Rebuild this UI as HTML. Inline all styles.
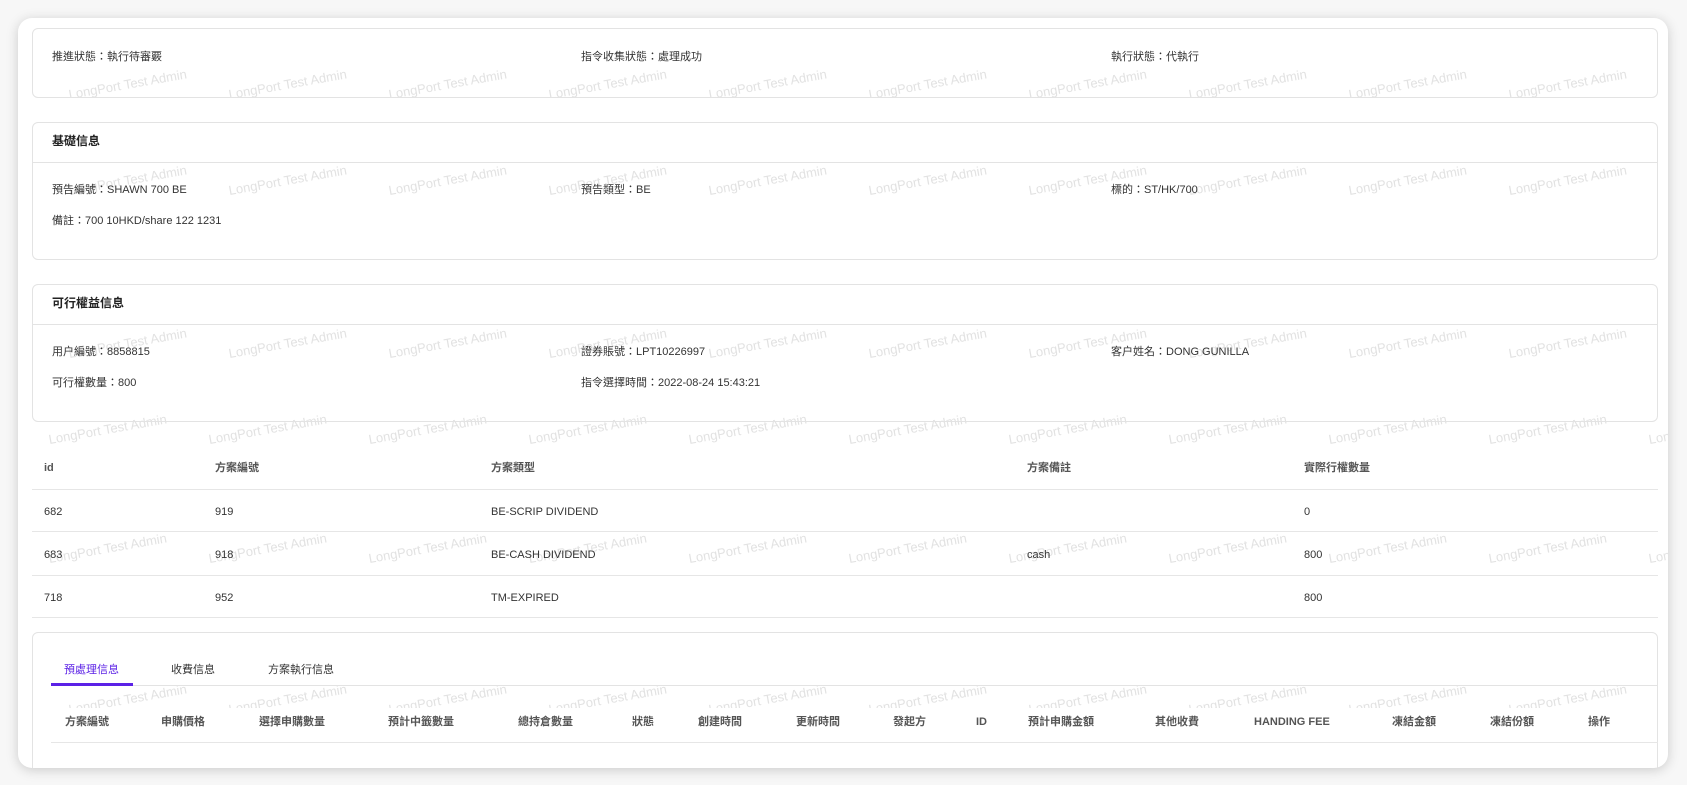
<!DOCTYPE html>
<html><head><meta charset="utf-8"><style>
*{box-sizing:border-box;margin:0;padding:0}
body{width:1687px;height:785px;background:#f7f7f7;position:relative;overflow:hidden;font-family:"Liberation Sans","Noto Sans CJK TC",sans-serif;font-size:11px;color:#333}
.win{position:absolute;left:18px;top:18px;width:1650px;height:750px;background:#fff;border-radius:14px;box-shadow:0 2px 12px rgba(0,0,0,.18);overflow:hidden}
.card{position:absolute;left:14px;width:1626px;border:1px solid #e3e3e3;border-radius:6px}
.hd{position:absolute;left:0;right:0;border-bottom:1px solid #e3e3e3}
.t{position:absolute;white-space:nowrap;line-height:14px}
.b{font-weight:bold;font-size:12px;color:#222}
.th{font-weight:bold;color:#555}
.line{position:absolute;height:1px;background:#e6e6e6}
.wr{position:absolute;left:0;width:1650px;overflow:hidden}
.wm{position:absolute;white-space:nowrap;color:#e2e2e2;font-size:13px;line-height:14px;transform:rotate(-10deg);transform-origin:left bottom}
</style></head><body>
<div class="win">
<div id="wms"></div>
<div class="card" style="top:10px;height:70px"></div>
<div class="t" style="left:34px;top:32px">推進狀態：執行待審覈</div>
<div class="t" style="left:563px;top:32px">指令收集狀態：處理成功</div>
<div class="t" style="left:1093px;top:32px">執行狀態：代執行</div>

<div class="card" style="top:104px;height:138px"><div class="hd" style="top:0;height:40px"></div></div>
<div class="t b" style="left:34px;top:116px">基礎信息</div>
<div class="t" style="left:34px;top:165px">預告編號：SHAWN 700 BE</div>
<div class="t" style="left:563px;top:165px">預告類型：BE</div>
<div class="t" style="left:1093px;top:165px">標的：ST/HK/700</div>
<div class="t" style="left:34px;top:196px">備註：700 10HKD/share 122 1231</div>

<div class="card" style="top:266px;height:138px"><div class="hd" style="top:0;height:40px"></div></div>
<div class="t b" style="left:34px;top:278px">可行權益信息</div>
<div class="t" style="left:34px;top:327px">用户編號：8858815</div>
<div class="t" style="left:563px;top:327px">證券賬號：LPT10226997</div>
<div class="t" style="left:1093px;top:327px">客户姓名：DONG GUNILLA</div>
<div class="t" style="left:34px;top:358px">可行權數量：800</div>
<div class="t" style="left:563px;top:358px">指令選擇時間：2022-08-24 15:43:21</div>

<div class="t th" style="left:26px;top:443px">id</div>
<div class="t th" style="left:197px;top:443px">方案編號</div>
<div class="t th" style="left:473px;top:443px">方案類型</div>
<div class="t th" style="left:1009px;top:443px">方案備註</div>
<div class="t th" style="left:1286px;top:443px">實際行權數量</div>
<div class="line" style="left:14px;width:1626px;top:471px"></div>
<div class="t" style="left:26px;top:487px">682</div><div class="t" style="left:197px;top:487px">919</div><div class="t" style="left:473px;top:487px">BE-SCRIP DIVIDEND</div><div class="t" style="left:1286px;top:487px">0</div>
<div class="line" style="left:14px;width:1626px;top:513px"></div>
<div class="t" style="left:26px;top:530px">683</div><div class="t" style="left:197px;top:530px">918</div><div class="t" style="left:473px;top:530px">BE-CASH DIVIDEND</div><div class="t" style="left:1009px;top:530px">cash</div><div class="t" style="left:1286px;top:530px">800</div>
<div class="line" style="left:14px;width:1626px;top:557px"></div>
<div class="t" style="left:26px;top:573px">718</div><div class="t" style="left:197px;top:573px">952</div><div class="t" style="left:473px;top:573px">TM-EXPIRED</div><div class="t" style="left:1286px;top:573px">800</div>
<div class="line" style="left:14px;width:1626px;top:599px"></div>

<div class="card" style="top:614px;height:160px"></div>
<div class="t" style="left:46px;top:645px;color:#5b21e6">預處理信息</div>
<div class="t" style="left:153px;top:645px">收費信息</div>
<div class="t" style="left:250px;top:645px">方案執行信息</div>
<div class="line" style="left:33px;width:1607px;top:667px;background:#e3e3e3"></div>
<div style="position:absolute;left:33px;top:665px;width:82px;height:3px;background:#5b21e6"></div>
<div class="t th" style="left:47px;top:697px">方案編號</div>
<div class="t th" style="left:143px;top:697px">申購價格</div>
<div class="t th" style="left:241px;top:697px">選擇申購數量</div>
<div class="t th" style="left:370px;top:697px">預計中籤數量</div>
<div class="t th" style="left:500px;top:697px">總持倉數量</div>
<div class="t th" style="left:614px;top:697px">狀態</div>
<div class="t th" style="left:680px;top:697px">創建時間</div>
<div class="t th" style="left:778px;top:697px">更新時間</div>
<div class="t th" style="left:875px;top:697px">發起方</div>
<div class="t th" style="left:958px;top:697px">ID</div>
<div class="t th" style="left:1010px;top:697px">預計申購金額</div>
<div class="t th" style="left:1137px;top:697px">其他收費</div>
<div class="t th" style="left:1236px;top:697px">HANDING FEE</div>
<div class="t th" style="left:1374px;top:697px">凍結金額</div>
<div class="t th" style="left:1472px;top:697px">凍結份額</div>
<div class="t th" style="left:1570px;top:697px">操作</div>
<div class="line" style="left:33px;width:1607px;top:724px"></div>
</div>
<script>
var rows=[[85,52,10,80],[181,52,0,750],[344,52,0,750],[430,32,0,750],[549,32,0,750],[700,52,668,690]],h='';
rows.forEach(function(r){
 h+='<div class="wr" style="top:'+r[2]+'px;height:'+(r[3]-r[2])+'px">';
 for(var x=r[1];x<1650;x+=160){h+='<div class="wm" style="left:'+x+'px;top:'+(r[0]-15-r[2])+'px">LongPort Test Admin</div>';}
 h+='</div>';
});
document.getElementById('wms').innerHTML=h;
</script>
</body></html>
